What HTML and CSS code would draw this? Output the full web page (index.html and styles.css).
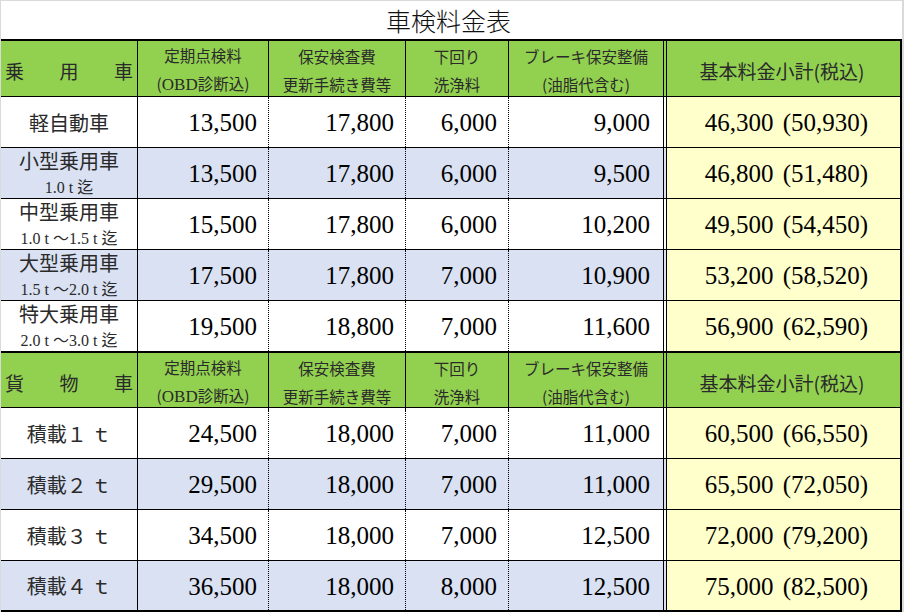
FILE: index.html
```html
<!DOCTYPE html>
<html lang="ja">
<head>
<meta charset="utf-8">
<title>車検料金表</title>
<link rel="stylesheet" href="styles.css">
</head>
<body>
<div class="sheet">
  <div class="title">車検料金表</div>
  <div class="table">
    <div class="row head h1">
      <div class="c c1 spread"><span>乗</span><span>用</span><span>車</span></div>
      <div class="c c2 hc"><span>定期点検料</span><span>(<span class="ser">OBD</span>診断込)</span></div>
      <div class="c c3 hc"><span>保安検査費</span><span>更新手続き費等</span></div>
      <div class="c c4 hc"><span>下回り</span><span>洗浄料</span></div>
      <div class="c c5 hc"><span>ブレーキ保安整備</span><span>(油脂代含む)</span></div>
      <div class="c c6 hc total-h">基本料金小計(税込)</div>
    </div>
    <div class="row body">
      <div class="c c1 lab">軽自動車</div>
      <div class="c c2 num">13,500</div>
      <div class="c c3 num">17,800</div>
      <div class="c c4 num">6,000</div>
      <div class="c c5 num">9,000</div>
      <div class="c c6 tot">46,300 (50,930)</div>
    </div>
    <div class="row body alt">
      <div class="c c1 lab2"><span class="l1">小型乗用車</span><span class="l2">1.0 t 迄</span></div>
      <div class="c c2 num">13,500</div>
      <div class="c c3 num">17,800</div>
      <div class="c c4 num">6,000</div>
      <div class="c c5 num">9,500</div>
      <div class="c c6 tot">46,800 (51,480)</div>
    </div>
    <div class="row body">
      <div class="c c1 lab2"><span class="l1">中型乗用車</span><span class="l2">1.0 t ～1.5 t 迄</span></div>
      <div class="c c2 num">15,500</div>
      <div class="c c3 num">17,800</div>
      <div class="c c4 num">6,000</div>
      <div class="c c5 num">10,200</div>
      <div class="c c6 tot">49,500 (54,450)</div>
    </div>
    <div class="row body alt">
      <div class="c c1 lab2"><span class="l1">大型乗用車</span><span class="l2">1.5 t ～2.0 t 迄</span></div>
      <div class="c c2 num">17,500</div>
      <div class="c c3 num">17,800</div>
      <div class="c c4 num">7,000</div>
      <div class="c c5 num">10,900</div>
      <div class="c c6 tot">53,200 (58,520)</div>
    </div>
    <div class="row body r5">
      <div class="c c1 lab2"><span class="l1">特大乗用車</span><span class="l2">2.0 t ～3.0 t 迄</span></div>
      <div class="c c2 num">19,500</div>
      <div class="c c3 num">18,800</div>
      <div class="c c4 num">7,000</div>
      <div class="c c5 num">11,600</div>
      <div class="c c6 tot">56,900 (62,590)</div>
    </div>
    <div class="row head h2">
      <div class="c c1 spread"><span>貨</span><span>物</span><span>車</span></div>
      <div class="c c2 hc"><span>定期点検料</span><span>(<span class="ser">OBD</span>診断込)</span></div>
      <div class="c c3 hc"><span>保安検査費</span><span>更新手続き費等</span></div>
      <div class="c c4 hc"><span>下回り</span><span>洗浄料</span></div>
      <div class="c c5 hc"><span>ブレーキ保安整備</span><span>(油脂代含む)</span></div>
      <div class="c c6 hc total-h">基本料金小計(税込)</div>
    </div>
    <div class="row body">
      <div class="c c1 lab">積載１ ｔ</div>
      <div class="c c2 num">24,500</div>
      <div class="c c3 num">18,000</div>
      <div class="c c4 num">7,000</div>
      <div class="c c5 num">11,000</div>
      <div class="c c6 tot">60,500 (66,550)</div>
    </div>
    <div class="row body alt">
      <div class="c c1 lab">積載２ ｔ</div>
      <div class="c c2 num">29,500</div>
      <div class="c c3 num">18,000</div>
      <div class="c c4 num">7,000</div>
      <div class="c c5 num">11,000</div>
      <div class="c c6 tot">65,500 (72,050)</div>
    </div>
    <div class="row body">
      <div class="c c1 lab">積載３ ｔ</div>
      <div class="c c2 num">34,500</div>
      <div class="c c3 num">18,000</div>
      <div class="c c4 num">7,000</div>
      <div class="c c5 num">12,500</div>
      <div class="c c6 tot">72,000 (79,200)</div>
    </div>
    <div class="row body alt last">
      <div class="c c1 lab">積載４ ｔ</div>
      <div class="c c2 num">36,500</div>
      <div class="c c3 num">18,000</div>
      <div class="c c4 num">8,000</div>
      <div class="c c5 num">12,500</div>
      <div class="c c6 tot">75,000 (82,500)</div>
    </div>
  </div>
</div>
</body>
</html>
```

FILE: styles.css
```css
html, body {
  margin: 0;
}
body {
  background: #dadada;
  width: 904px;
  height: 612px;
  overflow: hidden;
  padding: 1px 0 0 1px;
  box-sizing: border-box;
  font-family: "Noto Sans CJK JP", sans-serif;
  color: #1e1e1e;
}
.sheet {
  width: 901px;
  background: #fff;
}
.title {
  height: 38px;
  display: flex;
  align-items: center;
  justify-content: center;
  font-size: 25px;
  line-height: 1;
  font-weight: 300;
  color: #111;
  padding-right: 6px;
  box-sizing: border-box;
}
.table {
  border-top: 2px solid #000;
}
.row {
  display: grid;
  grid-template-columns: 137px 131px 137px 103px 158px 235px;
  height: 51px;
  border-bottom: 1px solid #000;
  box-sizing: border-box;
}
.row.h1 {
  height: 56px;
}
.row.r5 {
  height: 50px;
  border-bottom: none;
}
.row.h2 {
  height: 57px;
  border-top: 2px solid #000;
}
.row.last {
  height: 51px;
  border-bottom: 2px solid #000;
}
.head {
  background: #92d050;
}
.alt {
  background: #d9e1f2;
}
.c {
  box-sizing: border-box;
  border-right: 1px solid #000;
  display: flex;
  align-items: center;
  min-width: 0;
}
.c5 {
  border-right: 4px double #000;
}
.c6 {
  border-right: 2px solid #000;
  justify-content: center;
}
.body .c2,
.body .c3,
.body .c4 {
  border-right-style: dotted;
}
.body .c6 {
  background: #ffffcc;
}
.hc {
  flex-direction: column;
  justify-content: center;
  font-size: 15.5px;
  line-height: 28px;
  color: #2a2a2a;
  white-space: nowrap;
}
.ser {
  font-family: "Liberation Serif", serif;
  font-size: 17px;
}
.total-h {
  flex-direction: row;
  font-size: 19px;
  line-height: 1;
  padding-right: 3px;
}
.spread {
  justify-content: space-between;
  padding: 0 4px 0 4px;
  font-size: 19px;
  color: #2a2a2a;
}
.lab {
  justify-content: center;
  font-size: 20px;
  color: #2a2a2a;
}
.lab2 {
  flex-direction: column;
  align-items: center;
  justify-content: flex-start;
  color: #2a2a2a;
}
.lab2 .l1 {
  font-size: 20px;
  line-height: 26px;
}
.lab2 .l2 {
  font-family: "Liberation Serif", "Noto Sans CJK JP", serif;
  font-size: 16px;
  line-height: 20px;
  padding-top: 4px;
  white-space: nowrap;
}
.num, .tot {
  font-family: "Liberation Serif", serif;
  font-size: 25px;
  color: #000;
  white-space: nowrap;
  padding-top: 2px;
}
.num {
  justify-content: flex-end;
  padding-right: 11px;
}
.c5.num {
  padding-right: 13px;
}
.tot {
  padding-left: 6px;
  word-spacing: 3px;
}
```
